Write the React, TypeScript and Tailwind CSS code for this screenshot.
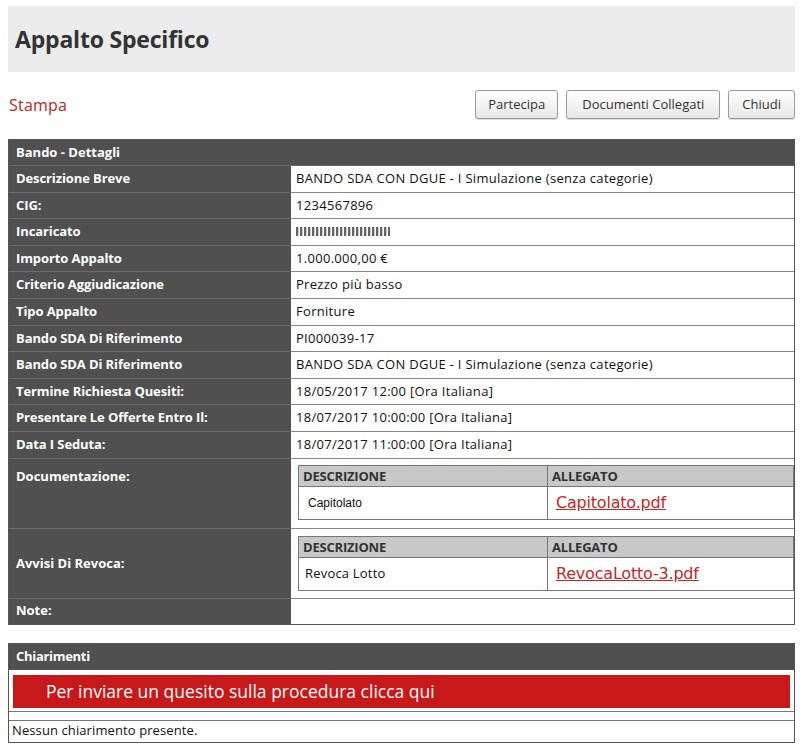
import React from "react";

const rows: [string, React.ReactNode][] = [
  ["Descrizione Breve", "BANDO SDA CON DGUE - I Simulazione (senza categorie)"],
  ["CIG:", "1234567896"],
  ["Incaricato", <span className="inline-block h-[9px] w-[94px] bg-[repeating-linear-gradient(90deg,#222_0_2px,#bbb_2px_3px,#fff_3px_4px)] opacity-70" />],
  ["Importo Appalto", "1.000.000,00 €"],
  ["Criterio Aggiudicazione", "Prezzo più basso"],
  ["Tipo Appalto", "Forniture"],
  ["Bando SDA Di Riferimento", "PI000039-17"],
  ["Bando SDA Di Riferimento", "BANDO SDA CON DGUE - I Simulazione (senza categorie)"],
  ["Termine Richiesta Quesiti:", "18/05/2017 12:00 [Ora Italiana]"],
  ["Presentare Le Offerte Entro Il:", "18/07/2017 10:00:00 [Ora Italiana]"],
  ["Data I Seduta:", "18/07/2017 11:00:00 [Ora Italiana]"],
];

function DocTable({ desc, file, descClass }: { desc: string; file: string; descClass: string }) {
  return (
    <div className="border border-[#777] w-full">
      <div className="flex h-[21px] bg-[#c8c8c8] border-b border-[#777] text-[13px] font-bold text-[#333] font-['Open_Sans',sans-serif] tracking-[-0.2px]">
        <div className="w-[249px] border-r border-[#777] px-[4px] leading-[21px]">DESCRIZIONE</div>
        <div className="flex-1 px-[4px] leading-[21px]">ALLEGATO</div>
      </div>
      <div className="flex h-[32px] bg-white">
        <div className={"w-[249px] border-r border-[#777] flex items-center " + descClass}>{desc}</div>
        <div className="flex-1 flex items-center px-[8px]">
          <span className="text-[16px] text-[#c0272d] underline font-['DejaVu_Sans',sans-serif] tracking-[-0.2px]">{file}</span>
        </div>
      </div>
    </div>
  );
}

const buttons: [string, string][] = [
  ["Partecipa", "px-[12px]"],
  ["Documenti Collegati", "px-[15px]"],
  ["Chiudi", "px-[13px]"],
];

export default function App() {
  return (
    <div className="bg-white w-[802px] h-[750px] font-['Open_Sans',sans-serif] text-[13px] text-[#111] pt-[6px] px-[8px] pr-[7px]">
      <div className="bg-[#ececec] h-[66px] flex items-center px-[7px]">
        <h1 className="text-[23px] font-bold text-[#333] tracking-[-0.2px]">Appalto Specifico</h1>
      </div>
      <div className="flex items-center justify-between mt-[18px] h-[29px]">
        <span className="text-[16px] text-[#b5262b] ml-[1px] tracking-[0.2px]">Stampa</span>
        <div className="flex gap-[8px]">
          {buttons.map(([b, p]) => (
            <button
              key={b}
              className={"h-[29px] border border-[#9a9a9a] rounded-[3px] bg-gradient-to-b from-white to-[#e8e8e8] text-[13px] text-[#333] shadow-[0_1px_1px_rgba(0,0,0,0.15)] " + p}
            >
              {b}
            </button>
          ))}
        </div>
      </div>

      <div className="mt-[20px] border border-[#555] bg-[#505050]">
        <div className="h-[26px] flex items-center px-[7px] text-white font-bold border-b border-[#6a6a6a]">Bando - Dettagli</div>
        {rows.map(([l, v], i) => (
          <div key={i} className="flex h-[26.6px] border-b border-[#6a6a6a]">
            <div className="w-[282px] flex items-center px-[7px] text-white font-bold tracking-[-0.1px]">{l}</div>
            <div className="flex-1 bg-white flex items-center px-[5px] border-b border-[#888] -mb-px tracking-[0.3px]">{v}</div>
          </div>
        ))}
        <div className="flex h-[70px] border-b border-[#6a6a6a]">
          <div className="w-[282px] px-[7px] pt-[8px] text-white font-bold">Documentazione:</div>
          <div className="flex-1 bg-white pl-[7px] pt-[6px] border-b border-[#888] -mb-px">
            <DocTable desc="Capitolato" file="Capitolato.pdf" descClass="px-[9px] text-[12px] font-['Liberation_Sans',sans-serif]" />
          </div>
        </div>
        <div className="flex h-[70px] border-b border-[#6a6a6a]">
          <div className="w-[282px] px-[7px] flex items-center text-white font-bold pt-[2px]">Avvisi Di Revoca:</div>
          <div className="flex-1 bg-white pl-[7px] pt-[7px] border-b border-[#888] -mb-px">
            <DocTable desc="Revoca Lotto" file="RevocaLotto-3.pdf" descClass="px-[6px] text-[13px] tracking-[0.2px]" />
          </div>
        </div>
        <div className="flex h-[25px]">
          <div className="w-[282px] px-[7px] flex items-center text-white font-bold">Note:</div>
          <div className="flex-1 bg-white"></div>
        </div>
      </div>

      <div className="mt-[18px] border border-[#555]">
        <div className="h-[26px] bg-[#505050] flex items-center px-[7px] text-white font-bold tracking-[-0.3px]">Chiarimenti</div>
        <div className="px-[4px] pt-[5px] pb-[3px] border-b border-[#777]">
          <div className="h-[33px] bg-[#c8191a] flex items-center pl-[33px] text-white text-[17.5px]">
            Per inviare un quesito sulla procedura clicca qui
          </div>
        </div>
        <div className="h-[9px] border-b border-[#777]"></div>
        <div className="h-[21px] flex items-center px-[3px] text-[13px] tracking-[0.1px]">Nessun chiarimento presente.</div>
      </div>
    </div>
  );
}
